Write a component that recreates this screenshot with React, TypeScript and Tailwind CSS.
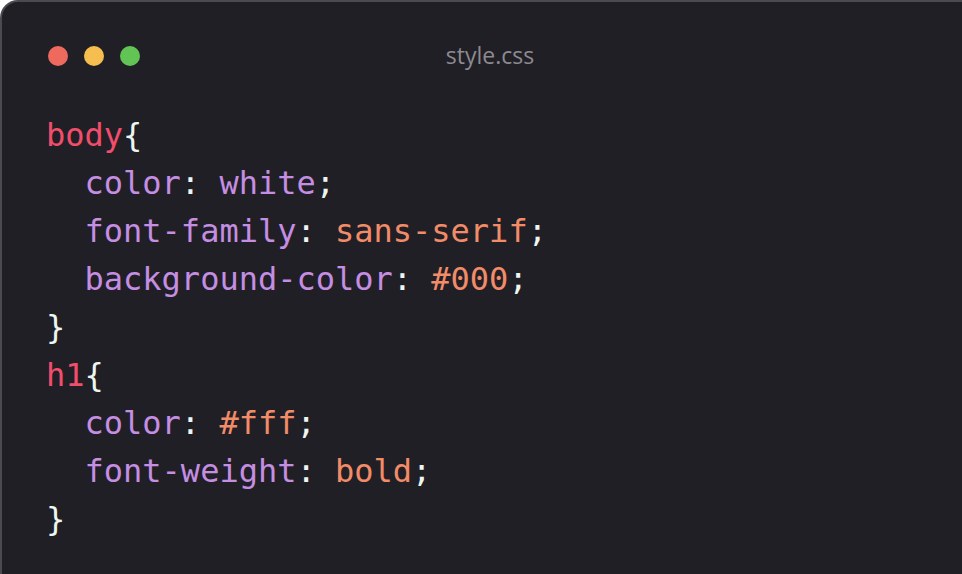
import React from "react";

type Tok = { t: string; c: string };

const PINK = "text-[#f24d6c]";
const PURPLE = "text-[#c48ee2]";
const ORANGE = "text-[#f28c68]";
const WHITE = "text-[#eef6f1]";

const lines: Tok[][] = [
    [{ t: "body", c: PINK }, { t: "{", c: WHITE }],
    [{ t: "  color", c: PURPLE }, { t: ": ", c: WHITE }, { t: "white", c: PURPLE }, { t: ";", c: WHITE }],
    [{ t: "  font-family", c: PURPLE }, { t: ": ", c: WHITE }, { t: "sans-serif", c: ORANGE }, { t: ";", c: WHITE }],
    [{ t: "  background-color", c: PURPLE }, { t: ": ", c: WHITE }, { t: "#000", c: ORANGE }, { t: ";", c: WHITE }],
    [{ t: "}", c: WHITE }],
    [{ t: "h1", c: PINK }, { t: "{", c: WHITE }],
    [{ t: "  color", c: PURPLE }, { t: ": ", c: WHITE }, { t: "#fff", c: ORANGE }, { t: ";", c: WHITE }],
    [{ t: "  font-weight", c: PURPLE }, { t: ": ", c: WHITE }, { t: "bold", c: ORANGE }, { t: ";", c: WHITE }],
    [{ t: "}", c: WHITE }],
];

export default function App() {
    return (
        <div className="h-[574px] w-[962px] overflow-hidden bg-white">
            <div className="w-[980px] h-[620px] rounded-[18px] border-2 border-[#4b4a50] bg-[#211f26] pl-[46px] pt-[42px]">
                {/* Title bar */}
                <div className="grid grid-cols-[1fr_auto_1fr] items-center h-[20px] w-[884px]">
                    <div className="flex items-center gap-4">
                        <span className="w-5 h-5 rounded-full bg-[#ee6a5f]" />
                        <span className="w-5 h-5 rounded-full bg-[#f5be4f]" />
                        <span className="w-5 h-5 rounded-full bg-[#61c454]" />
                    </div>
                    <span className="text-[23px] text-[#8c8b90] leading-none" style={{ fontFamily: "'Open Sans', sans-serif" }}>
                        style.css
                    </span>
                    <div />
                </div>

                {/* Code */}
                <div
                    className="mt-[47px] -ml-[2px] text-[32px] leading-[48px]"
                    style={{ fontFamily: "'DejaVu Sans Mono', 'Liberation Mono', monospace" }}
                >
                    {lines.map((line, i) => (
                        <div key={i} className="whitespace-pre">
                            {line.map((tok, j) => (
                                <span key={j} className={tok.c}>{tok.t}</span>
                            ))}
                        </div>
                    ))}
                </div>
            </div>
        </div>
    );
}
